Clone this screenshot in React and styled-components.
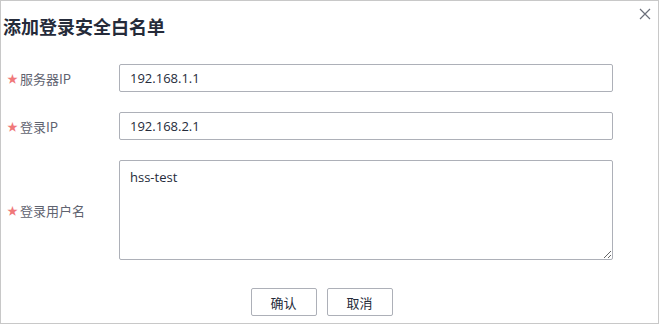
import React from "react";
import styled, { createGlobalStyle } from "styled-components";

const GlobalStyle = createGlobalStyle`
  html, body {
    margin: 0;
    padding: 0;
    background: #ffffff;
  }
  body {
    font-family: "Noto Sans", "Noto Sans CJK SC", sans-serif;
  }
`;

const Dialog = styled.div`
  position: relative;
  box-sizing: border-box;
  width: 659px;
  height: 324px;
  border: 1px solid #c8c8c8;
  background: #ffffff;
`;

const Title = styled.h2`
  margin: 0;
  padding: 11px 0 0 2px;
  font-family: "Noto Sans CJK SC", sans-serif;
  font-size: 18px;
  line-height: 28px;
  font-weight: 700;
  color: #252b3a;
`;

const CloseButton = styled.button`
  position: absolute;
  top: 6px;
  right: 6px;
  width: 14px;
  height: 14px;
  padding: 0;
  border: none;
  background: none;
  display: flex;
  align-items: center;
  justify-content: center;
  cursor: pointer;
`;

const Form = styled.form`
  display: flex;
  flex-direction: column;
  gap: 20px;
  margin-top: 24px;
`;

const Row = styled.div`
  display: grid;
  grid-template-columns: 118px 494px;
  align-items: center;
`;

const Label = styled.label`
  display: flex;
  align-items: center;
  gap: 2px;
  padding-left: 6px;
  font-family: "Noto Sans CJK SC", sans-serif;
  font-size: 13px;
  color: #5f6370;
`;

const Star = styled.span`
  color: #f0787a;
  font-size: 11px;
  line-height: 1;
`;

const Input = styled.input`
  box-sizing: border-box;
  width: 100%;
  height: 28px;
  padding: 0 10px;
  border: 1px solid #adb0b8;
  border-radius: 2px;
  font-family: "Open Sans", "Noto Sans CJK SC", sans-serif;
  font-size: 13px;
  color: #252b3a;
  outline: none;
`;

const TextArea = styled.textarea`
  box-sizing: border-box;
  width: 100%;
  height: 100px;
  padding: 6px 10px;
  border: 1px solid #adb0b8;
  border-radius: 2px;
  font-family: "Open Sans", "Noto Sans CJK SC", sans-serif;
  font-size: 13px;
  line-height: 20px;
  color: #252b3a;
  resize: vertical;
  outline: none;
`;

const Footer = styled.div`
  display: flex;
  justify-content: center;
  gap: 10px;
  margin-top: 8px;
  padding-right: 16px;
`;

const Button = styled.button`
  box-sizing: border-box;
  width: 66px;
  height: 28px;
  padding: 0;
  border: 1px solid #adb0b8;
  border-radius: 2px;
  background: #ffffff;
  font-family: "Noto Sans CJK SC", sans-serif;
  font-size: 13px;
  color: #252b3a;
  cursor: pointer;
`;

function CloseIcon() {
  return (
    <svg width="12" height="12" viewBox="0 0 12 12">
      <path d="M1 1 L11 11 M11 1 L1 11" stroke="#6b6f7a" strokeWidth="1.2" fill="none" />
    </svg>
  );
}

export default function App() {
  return (
    <>
      <GlobalStyle />
      <Dialog>
        <Title>添加登录安全白名单</Title>
        <CloseButton aria-label="关闭">
          <CloseIcon />
        </CloseButton>
        <Form onSubmit={(e) => e.preventDefault()}>
          <Row>
            <Label>
              <Star>★</Star>服务器IP
            </Label>
            <Input defaultValue="192.168.1.1" />
          </Row>
          <Row>
            <Label>
              <Star>★</Star>登录IP
            </Label>
            <Input defaultValue="192.168.2.1" />
          </Row>
          <Row>
            <Label>
              <Star>★</Star>登录用户名
            </Label>
            <TextArea defaultValue="hss-test" />
          </Row>
          <Footer>
            <Button type="submit">确认</Button>
            <Button type="button">取消</Button>
          </Footer>
        </Form>
      </Dialog>
    </>
  );
}
